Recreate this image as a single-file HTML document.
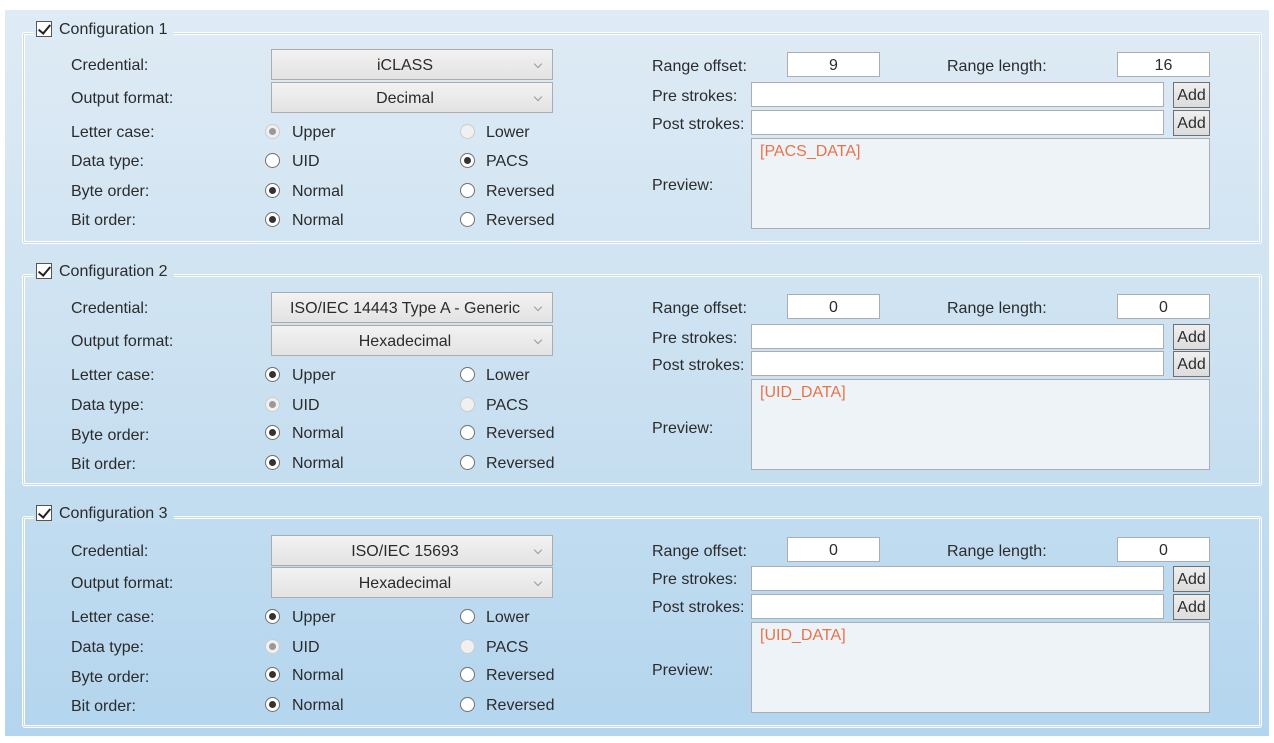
<!DOCTYPE html>
<html><head><meta charset="utf-8"><style>
*{box-sizing:border-box;margin:0;padding:0}
body{width:1274px;height:743px;background:#fff;font-family:"Liberation Sans",sans-serif;font-size:16px;color:#2b2b2b;position:relative;overflow:hidden}
.outer{position:absolute;left:5px;top:10px;width:1264px;height:726px;background:linear-gradient(#dfebf5,#cbe1f1 50%,#b3d5ee)}
.g{position:absolute;left:22px;width:1240px;height:212px;border:1px solid #fff;box-shadow:inset 0 0 0 1px #c9dcea,inset 0 0 0 2px #fff;border-radius:3px}
.a{position:absolute;white-space:nowrap;line-height:20px;padding-top:2px}
.t{position:absolute;left:34px;padding:0 6px 0 2px;height:20px;line-height:20px}
.cb{display:inline-block;width:16px;height:16px;border:1px solid #555;background:#fff;vertical-align:-3px;margin-right:7px;position:relative}
.cb:after{content:"";position:absolute;left:4px;top:0px;width:5px;height:10px;border:solid #222;border-width:0 2px 2px 0;transform:rotate(40deg)}
.combo{position:absolute;left:271px;width:282px;height:31px;border:1px solid #acacac;background:linear-gradient(#f2f2f2,#e3e3e3);text-align:center;line-height:31px;padding-right:14px}
.combo:after{content:"";position:absolute;right:11px;top:11px;width:5px;height:5px;border:solid #999;border-width:0 1px 1px 0;transform:rotate(45deg)}
.r{position:absolute;width:15px;height:15px;border-radius:50%;border:1px solid #707070;background:#fff}
.r.c:after{content:"";position:absolute;left:3px;top:3px;width:7px;height:7px;border-radius:50%;background:#333}
.r.d{border-color:#ccc;background:#f0f0f0}
.r.d.c:after{background:#999}
.in{position:absolute;background:#fff;border:1px solid #abadb3;text-align:center;line-height:25px}
.add{position:absolute;left:1173px;width:37px;height:26px;border:1px solid #707070;background:linear-gradient(#efefef,#dcdcdc);text-align:center;line-height:25px}
.pv{position:absolute;left:751px;width:459px;height:91px;border:1px solid #abadb3;background:#eef3f8;color:#e8734a;padding:4px 8px}
</style></head><body>
<div class="outer"></div>

<!-- group 1 -->
<div style="position:absolute;left:0;top:0;width:1274px;height:243px">
<div class="g" style="top:32px"></div>
<div class="t" style="top:20px;background:#dcebf5"><span class="cb"></span>Configuration 1</div>
<div class="a" style="left:71px;top:54px">Credential:</div>
<div class="combo" style="top:49px">iCLASS</div>
<div class="a" style="left:71px;top:87px">Output format:</div>
<div class="combo" style="top:82px">Decimal</div>
<div class="a" style="left:71px;top:121px">Letter case:</div>
<div class="a" style="left:71px;top:150px">Data type:</div>
<div class="a" style="left:71px;top:180px">Byte order:</div>
<div class="a" style="left:71px;top:209px">Bit order:</div>
<div class="r d c" style="left:265px;top:124px"></div><div class="a" style="left:292px;top:121px">Upper</div>
<div class="r d" style="left:460px;top:124px"></div><div class="a" style="left:486px;top:121px">Lower</div>
<div class="r" style="left:265px;top:153px"></div><div class="a" style="left:292px;top:150px">UID</div>
<div class="r c" style="left:460px;top:153px"></div><div class="a" style="left:486px;top:150px">PACS</div>
<div class="r c" style="left:265px;top:183px"></div><div class="a" style="left:292px;top:180px">Normal</div>
<div class="r" style="left:460px;top:183px"></div><div class="a" style="left:486px;top:180px">Reversed</div>
<div class="r c" style="left:265px;top:212px"></div><div class="a" style="left:292px;top:209px">Normal</div>
<div class="r" style="left:460px;top:212px"></div><div class="a" style="left:486px;top:209px">Reversed</div>
<div class="a" style="left:652px;top:55px">Range offset:</div>
<div class="in" style="left:787px;top:52px;width:93px;height:25px">9</div>
<div class="a" style="left:947px;top:55px">Range length:</div>
<div class="in" style="left:1117px;top:52px;width:93px;height:25px">16</div>
<div class="a" style="left:652px;top:85px">Pre strokes:</div>
<div class="in" style="left:751px;top:82px;width:413px;height:25px"></div>
<div class="add" style="top:82px">Add</div>
<div class="a" style="left:652px;top:113px">Post strokes:</div>
<div class="in" style="left:751px;top:110px;width:413px;height:25px"></div>
<div class="add" style="top:110px">Add</div>
<div class="a" style="left:652px;top:174px">Preview:</div>
<div class="pv" style="top:138px">[PACS_DATA]</div>
</div>

<!-- group 2 -->
<div style="position:absolute;left:0;top:242px;width:1274px;height:243px">
<div class="g" style="top:32px"></div>
<div class="t" style="top:20px;background:#d0e4f2"><span class="cb"></span>Configuration 2</div>
<div class="a" style="left:71px;top:55px">Credential:</div>
<div class="combo" style="top:50px">ISO/IEC 14443 Type A - Generic</div>
<div class="a" style="left:71px;top:88px">Output format:</div>
<div class="combo" style="top:83px">Hexadecimal</div>
<div class="a" style="left:71px;top:122px">Letter case:</div>
<div class="a" style="left:71px;top:152px">Data type:</div>
<div class="a" style="left:71px;top:182px">Byte order:</div>
<div class="a" style="left:71px;top:211px">Bit order:</div>
<div class="r c" style="left:265px;top:125px"></div><div class="a" style="left:292px;top:122px">Upper</div>
<div class="r" style="left:460px;top:125px"></div><div class="a" style="left:486px;top:122px">Lower</div>
<div class="r d c" style="left:265px;top:155px"></div><div class="a" style="left:292px;top:152px">UID</div>
<div class="r d" style="left:460px;top:155px"></div><div class="a" style="left:486px;top:152px">PACS</div>
<div class="r c" style="left:265px;top:183px"></div><div class="a" style="left:292px;top:180px">Normal</div>
<div class="r" style="left:460px;top:183px"></div><div class="a" style="left:486px;top:180px">Reversed</div>
<div class="r c" style="left:265px;top:213px"></div><div class="a" style="left:292px;top:210px">Normal</div>
<div class="r" style="left:460px;top:213px"></div><div class="a" style="left:486px;top:210px">Reversed</div>
<div class="a" style="left:652px;top:55px">Range offset:</div>
<div class="in" style="left:787px;top:52px;width:93px;height:25px">0</div>
<div class="a" style="left:947px;top:55px">Range length:</div>
<div class="in" style="left:1117px;top:52px;width:93px;height:25px">0</div>
<div class="a" style="left:652px;top:85px">Pre strokes:</div>
<div class="in" style="left:751px;top:82px;width:413px;height:25px"></div>
<div class="add" style="top:82px">Add</div>
<div class="a" style="left:652px;top:112px">Post strokes:</div>
<div class="in" style="left:751px;top:109px;width:413px;height:25px"></div>
<div class="add" style="top:109px">Add</div>
<div class="a" style="left:652px;top:175px">Preview:</div>
<div class="pv" style="top:137px">[UID_DATA]</div>
</div>

<!-- group 3 -->
<div style="position:absolute;left:0;top:484px;width:1274px;height:243px">
<div class="g" style="top:32px"></div>
<div class="t" style="top:20px;background:#c2dcf0"><span class="cb"></span>Configuration 3</div>
<div class="a" style="left:71px;top:56px">Credential:</div>
<div class="combo" style="top:51px">ISO/IEC 15693</div>
<div class="a" style="left:71px;top:88px">Output format:</div>
<div class="combo" style="top:83px">Hexadecimal</div>
<div class="a" style="left:71px;top:122px">Letter case:</div>
<div class="a" style="left:71px;top:152px">Data type:</div>
<div class="a" style="left:71px;top:182px">Byte order:</div>
<div class="a" style="left:71px;top:211px">Bit order:</div>
<div class="r c" style="left:265px;top:125px"></div><div class="a" style="left:292px;top:122px">Upper</div>
<div class="r" style="left:460px;top:125px"></div><div class="a" style="left:486px;top:122px">Lower</div>
<div class="r d c" style="left:265px;top:155px"></div><div class="a" style="left:292px;top:152px">UID</div>
<div class="r d" style="left:460px;top:155px"></div><div class="a" style="left:486px;top:152px">PACS</div>
<div class="r c" style="left:265px;top:183px"></div><div class="a" style="left:292px;top:180px">Normal</div>
<div class="r" style="left:460px;top:183px"></div><div class="a" style="left:486px;top:180px">Reversed</div>
<div class="r c" style="left:265px;top:213px"></div><div class="a" style="left:292px;top:210px">Normal</div>
<div class="r" style="left:460px;top:213px"></div><div class="a" style="left:486px;top:210px">Reversed</div>
<div class="a" style="left:652px;top:56px">Range offset:</div>
<div class="in" style="left:787px;top:53px;width:93px;height:25px">0</div>
<div class="a" style="left:947px;top:56px">Range length:</div>
<div class="in" style="left:1117px;top:53px;width:93px;height:25px">0</div>
<div class="a" style="left:652px;top:84px">Pre strokes:</div>
<div class="in" style="left:751px;top:82px;width:413px;height:25px"></div>
<div class="add" style="top:82px">Add</div>
<div class="a" style="left:652px;top:112px">Post strokes:</div>
<div class="in" style="left:751px;top:110px;width:413px;height:25px"></div>
<div class="add" style="top:110px">Add</div>
<div class="a" style="left:652px;top:175px">Preview:</div>
<div class="pv" style="top:138px">[UID_DATA]</div>
</div>
</body></html>
